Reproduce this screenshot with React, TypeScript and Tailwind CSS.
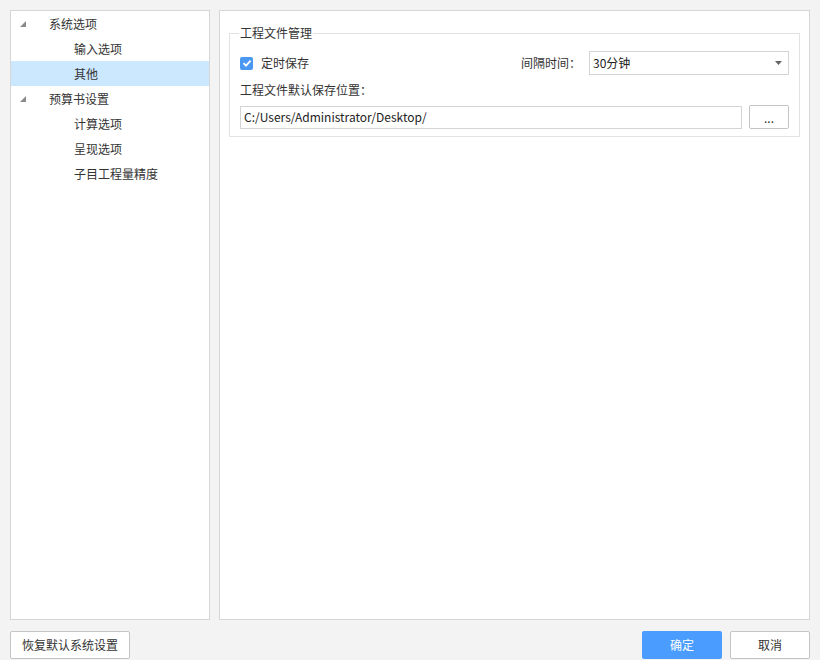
import React, { useState } from 'react';

interface TreeItem {
  label: string;
  level: number;
  expandable?: boolean;
}

const items: TreeItem[] = [
  { label: '系统选项', level: 0, expandable: true },
  { label: '输入选项', level: 1 },
  { label: '其他', level: 1 },
  { label: '预算书设置', level: 0, expandable: true },
  { label: '计算选项', level: 1 },
  { label: '呈现选项', level: 1 },
  { label: '子目工程量精度', level: 1 },
];

const Expander = () => (
  <svg width="6" height="6" viewBox="0 0 6 6" className="block">
    <polygon points="6,0 6,6 0,6" fill="#8a8a8a" />
  </svg>
);

const App: React.FC = () => {
  const [selected, setSelected] = useState('其他');
  const [autoSave, setAutoSave] = useState(true);

  return (
    <div
      className="w-[820px] h-[660px] bg-[#f3f3f3] flex flex-col text-[12px] text-[#333]"
      style={{ fontFamily: '"Microsoft YaHei", "Noto Sans CJK SC", "Noto Sans", sans-serif' }}
    >
      <div className="flex flex-1 gap-[9px] pl-[10px] pr-[10px] pt-[10px] min-h-0">
        {/* left tree */}
        <div className="w-[200px] bg-white border border-[#d6d6d6]">
          {items.map(item => (
            <div
              key={item.label}
              onClick={() => setSelected(item.label)}
              className={
                'h-[25px] flex items-center cursor-default ' +
                (selected === item.label ? 'bg-[#cce8ff]' : '')
              }
            >
              {item.level === 0 ? (
                <>
                  <div className="w-[38px] pl-[9px] flex items-center">
                    <Expander />
                  </div>
                  <span>{item.label}</span>
                </>
              ) : (
                <span className="pl-[63px]">{item.label}</span>
              )}
            </div>
          ))}
        </div>

        {/* right content */}
        <div className="flex-1 bg-white border border-[#d6d6d6] px-[9px] pt-[15px]">
          <fieldset className="border border-[#e2e2e2] px-[10px] pb-[7px] pt-[4px]">
            <legend className="ml-[-1px] px-[1px] text-[12px] leading-[14px]">工程文件管理</legend>
            <div className="flex items-center h-[24px] mt-[7px]">
              <button
                onClick={() => setAutoSave(!autoSave)}
                className={
                  'w-[13px] h-[13px] rounded-[2px] flex items-center justify-center ' +
                  (autoSave ? 'bg-[#4a98f2]' : 'border border-[#999] bg-white')
                }
              >
                {autoSave && (
                  <svg width="10" height="10" viewBox="0 0 10 10">
                    <path d="M1.5 5.2 L4 7.6 L8.6 2.6" stroke="white" strokeWidth="1.8" fill="none" />
                  </svg>
                )}
              </button>
              <span className="ml-[8px]">定时保存</span>
              <span className="ml-auto mr-[8px]">间隔时间：</span>
              <div className="w-[200px] h-[24px] border border-[#d4d4d4] flex items-center pl-[3px] pr-[6px]">
                <span className="flex-1 text-[#222]">30分钟</span>
                <svg width="7" height="4" viewBox="0 0 7 4">
                  <polygon points="0,0 7,0 3.5,4" fill="#666" />
                </svg>
              </div>
            </div>
            <div className="mt-[6px] leading-[18px]">工程文件默认保存位置：</div>
            <div className="flex items-center gap-[7px] mt-[6px]">
              <div className="flex-1 h-[23px] border border-[#d4d4d4] flex items-center px-[3px] text-[#222]">
                C:/Users/Administrator/Desktop/
              </div>
              <button className="w-[40px] h-[24px] border border-[#c4c4c4] rounded-[2px] bg-white text-[#333] leading-none pt-[2px]">
                ...
              </button>
            </div>
          </fieldset>
        </div>
      </div>

      {/* footer */}
      <div className="h-[40px] flex items-start px-[10px] pt-[11px]">
        <button className="h-[28px] px-[11px] border border-[#c4c4c4] rounded-[2px] bg-white">
          恢复默认系统设置
        </button>
        <button className="ml-auto w-[80px] h-[28px] rounded-[2px] bg-[#4a9dff] text-white">
          确定
        </button>
        <button className="ml-[8px] w-[80px] h-[28px] border border-[#c4c4c4] rounded-[2px] bg-white">
          取消
        </button>
      </div>
    </div>
  );
};

export default App;
